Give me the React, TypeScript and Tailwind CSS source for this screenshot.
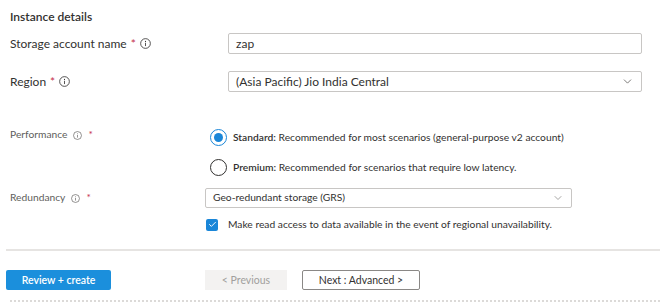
import { ChevronDown, Check } from 'lucide-react';

function InfoIcon({ size }: { size: number }) {
    return (
        <svg width={size} height={size} viewBox="0 0 12 12" fill="none" className="shrink-0">
            <circle cx="6" cy="6" r="5.3" stroke="currentColor" strokeWidth="0.9" />
            <circle cx="6" cy="3.7" r="0.6" fill="currentColor" />
            <path d="M6 5.2v3.6" stroke="currentColor" strokeWidth="0.9" />
        </svg>
    );
}

export default function App() {
    return (
        <div className="w-[660px] h-[302px] bg-white overflow-hidden font-['Lato','Noto_Sans',sans-serif] text-[#323130] relative">
            {/* ── Instance details ── */}
            <div className="px-[10px] pt-[8px]">
                <h2 className="text-[12px] font-semibold leading-[18px]">Instance details</h2>

                <div className="flex items-center mt-[7px] h-[21px]">
                    <div className="w-[218px] flex items-center gap-[4px] text-[12px]">
                        <span>Storage account name</span>
                        <span className="text-[#c4314b]">*</span>
                        <InfoIcon size={11} />
                    </div>
                    <div className="w-[414px] h-[21px] border border-[#c8c6c4] rounded-[2px] flex items-center px-[7px] text-[12px]">
                        zap
                    </div>
                </div>

                <div className="flex items-center mt-[17px] h-[21px]">
                    <div className="w-[218px] flex items-center gap-[4px] text-[12px]">
                        <span>Region</span>
                        <span className="text-[#c4314b]">*</span>
                        <InfoIcon size={11} />
                    </div>
                    <div className="w-[414px] h-[21px] border border-[#c8c6c4] rounded-[2px] flex items-center justify-between px-[7px] text-[12px]">
                        <span>(Asia Pacific) Jio India Central</span>
                        <ChevronDown className="w-[13px] h-[13px] text-[#605e5c]" strokeWidth={1.5} />
                    </div>
                </div>
            </div>

            {/* ── Performance / Redundancy ── */}
            <div className="pl-[10px] mt-[35px] text-[10.25px]">
                <div className="flex">
                    <div className="w-[200px] flex items-center gap-[6px] text-[#605e5c] h-[16px]">
                        <span>Performance</span>
                        <InfoIcon size={9} />
                        <span className="text-[#c4314b]">*</span>
                    </div>
                    <div className="flex flex-col gap-[13px] mt-[2px]">
                        <div className="flex items-center gap-[6px]">
                            <div className="w-[17px] h-[17px] rounded-full border border-[#1a86d8] flex items-center justify-center">
                                <div className="w-[9px] h-[9px] rounded-full bg-[#1a86d8]" />
                            </div>
                            <span>
                                <span className="font-semibold">Standard:</span> Recommended for most scenarios (general-purpose v2 account)
                            </span>
                        </div>
                        <div className="flex items-center gap-[6px]">
                            <div className="w-[17px] h-[17px] rounded-full border border-[#323130]" />
                            <span>
                                <span className="font-semibold">Premium:</span> Recommended for scenarios that require low latency.
                            </span>
                        </div>
                    </div>
                </div>

                <div className="flex mt-[12px]">
                    <div className="w-[195px] flex items-center gap-[6px] text-[#605e5c] h-[20px]">
                        <span>Redundancy</span>
                        <InfoIcon size={9} />
                        <span className="text-[#c4314b]">*</span>
                    </div>
                    <div className="flex flex-col gap-[9px]">
                        <div className="w-[367px] h-[20px] border border-[#c8c6c4] rounded-[2px] flex items-center justify-between px-[7px]">
                            <span>Geo-redundant storage (GRS)</span>
                            <ChevronDown className="w-[12px] h-[12px] text-[#8a8886]" strokeWidth={1.5} />
                        </div>
                        <div className="flex items-center gap-[10px] pl-[1px]">
                            <div className="w-[12px] h-[12px] rounded-[2px] bg-[#1a86d8] flex items-center justify-center">
                                <Check className="w-[9px] h-[9px] text-white" strokeWidth={2.5} />
                            </div>
                            <span>Make read access to data available in the event of regional unavailability.</span>
                        </div>
                    </div>
                </div>
            </div>

            {/* ── Footer ── */}
            <div className="ml-[6px] mt-[17px] border-t-2 border-[#e6e4e2]" />
            <div className="flex items-center pl-[6px] mt-[19px] text-[10.5px]">
                <button className="w-[105px] h-[20px] rounded-[2px] bg-[#1b8fdc] text-white font-semibold">
                    Review + create
                </button>
                <button className="ml-[94px] w-[82px] h-[20px] bg-[#f3f2f1] text-[#a19f9d]">
                    &lt; Previous
                </button>
                <button className="ml-[15px] w-[118px] h-[20px] border border-[#8a8886] rounded-[2px] bg-white">
                    Next : Advanced &gt;
                </button>
            </div>
            <div className="absolute left-[10px] right-0 bottom-0 border-b-2 border-dotted border-[#dcdad8]" />
        </div>
    );
}
